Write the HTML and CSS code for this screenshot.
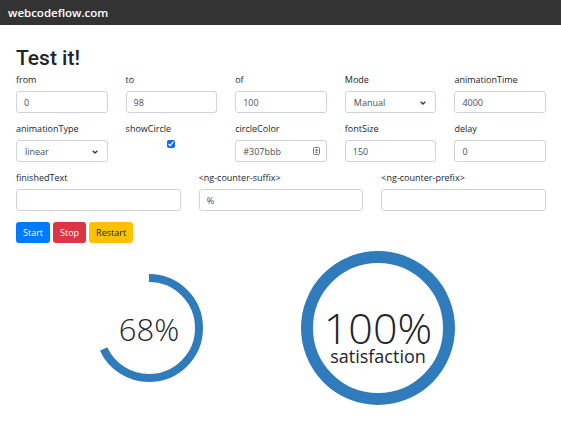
FILE: index.html
```html
<!DOCTYPE html>
<html lang="en">
<head>
	<meta charset="UTF-8">
	<title>ng-counter demo</title>
	<link rel="stylesheet" href="styles.css">
</head>
<body>
	<nav class="navbar">
		<span class="brand">webcodeflow.com</span>
	</nav>
	<div class="container">
		<h2 class="title">Test it!</h2>
		<div class="row row5">
			<div class="field"><label>from</label><input class="control" type="text" value="0"></div>
			<div class="field"><label>to</label><input class="control" type="text" value="98"></div>
			<div class="field"><label>of</label><input class="control" type="text" value="100"></div>
			<div class="field"><label>Mode</label>
				<div class="select-wrap">
					<select class="control select">
						<option>Manual</option>
					</select>
					<svg class="chevron" width="6" height="4" viewBox="0 0 6 4"><path d="M0.7 0.7 L3 3 L5.3 0.7" fill="none" stroke="#343a40" stroke-width="1.3"/></svg>
				</div>
			</div>
			<div class="field"><label>animationTime</label><input class="control" type="text" value="4000"></div>
		</div>
		<div class="row row5">
			<div class="field"><label>animationType</label>
				<div class="select-wrap">
					<select class="control select">
						<option>linear</option>
					</select>
					<svg class="chevron" width="6" height="4" viewBox="0 0 6 4"><path d="M0.7 0.7 L3 3 L5.3 0.7" fill="none" stroke="#343a40" stroke-width="1.3"/></svg>
				</div>
			</div>
			<div class="field"><label>showCircle</label>
				<div class="check"><input type="checkbox" checked></div>
			</div>
			<div class="field"><label>circleColor</label>
				<div class="control color">
					<span>#307bbb</span>
					<svg class="picker" width="7" height="8" viewBox="0 0 7 8">
						<rect x="0.5" y="0.5" width="6" height="7" rx="1" fill="#fff" stroke="#777"/>
						<rect x="2.5" y="2" width="2" height="2.5" fill="#777"/>
						<rect x="2.5" y="5" width="2" height="1" fill="#777"/>
					</svg>
				</div>
			</div>
			<div class="field"><label>fontSize</label><input class="control" type="text" value="150"></div>
			<div class="field"><label>delay</label><input class="control" type="text" value="0"></div>
		</div>
		<div class="row row3">
			<div class="field"><label>finishedText</label><input class="control" type="text" value=""></div>
			<div class="field"><label>&lt;ng-counter-suffix&gt;</label><input class="control" type="text" value="%"></div>
			<div class="field"><label>&lt;ng-counter-prefix&gt;</label><input class="control" type="text" value=""></div>
		</div>
		<div class="buttons">
			<button class="btn btn-start">Start</button>
			<button class="btn btn-stop">Stop</button>
			<button class="btn btn-restart">Restart</button>
		</div>
		<div class="counters">
			<div class="counter small">
				<svg width="108" height="108" viewBox="0 0 108 108">
					<circle cx="54" cy="54" r="50" fill="none" stroke="#307bbb" stroke-width="8"
						stroke-dasharray="213.6 400" transform="rotate(-90 54 54)"/>
				</svg>
				<div class="value">68%</div>
			</div>
			<div class="counter big">
				<svg width="154" height="154" viewBox="0 0 154 154">
					<circle cx="77" cy="77" r="71" fill="none" stroke="#307bbb" stroke-width="12"/>
				</svg>
				<div class="value">
					<span class="num">100%</span>
					<span class="sub">satisfaction</span>
				</div>
			</div>
		</div>
	</div>
</body>
</html>
```

FILE: styles.css
```css
* {
	margin: 0;
	padding: 0;
	box-sizing: border-box;
}
body {
	font-family: "Open Sans", "Noto Sans", sans-serif;
	color: #212529;
	background: #fff;
}
.navbar {
	height: 25px;
	background-color: #333;
	display: flex;
	align-items: center;
	padding-left: 8px;
}
.brand {
	color: #fff;
	font-weight: 600;
	font-size: 11.5px;
}
.container {
	padding: 0 15px 0 16px;
}
.title {
	font-family: Roboto, "Open Sans", sans-serif;
	font-size: 21px;
	font-weight: 500;
	line-height: 25px;
	margin-top: 21px;
	margin-bottom: 2px;
}
.row {
	display: grid;
	column-gap: 18px;
}
.row5 {
	grid-template-columns: repeat(5, 1fr);
}
.row3 {
	grid-template-columns: repeat(3, 1fr);
}
.field {
	display: flex;
	flex-direction: column;
	margin-bottom: 9px;
}
.field label {
	font-size: 9px;
	line-height: 14px;
	margin-bottom: 4px;
}
.control {
	display: block;
	width: 100%;
	height: 22px;
	border: 1px solid #ced4da;
	border-radius: 3px;
	padding: 0 7px;
	font-family: inherit;
	font-size: 9px;
	color: #495057;
	background: #fff;
	outline: none;
}
.select-wrap {
	position: relative;
}
.select {
	appearance: none;
	-webkit-appearance: none;
	padding-left: 8px;
}
.chevron {
	position: absolute;
	right: 10px;
	top: 10px;
	pointer-events: none;
}
.check {
	height: 22px;
	display: flex;
	justify-content: center;
}
.check input {
	width: 8px;
	height: 8px;
	margin-top: 0;
	accent-color: #0a6cff;
}
.color {
	display: flex;
	align-items: center;
	justify-content: space-between;
	padding-right: 6px;
}
.buttons {
	display: flex;
	gap: 3px;
	margin-top: 2px;
}
.btn {
	height: 21px;
	border: none;
	border-radius: 3px;
	padding: 0 7px;
	font-family: inherit;
	font-size: 9px;
	color: #fff;
}
.btn-start {
	background-color: #007bff;
}
.btn-stop {
	background-color: #dc3545;
}
.btn-restart {
	background-color: #ffc107;
	color: #212529;
}
.counters {
	display: flex;
	align-items: center;
	gap: 98px;
	padding-left: 79px;
	margin-top: 8px;
}
.counter {
	display: grid;
	place-items: center;
}
.counter svg,
.counter .value {
	grid-area: 1 / 1;
}
.counter .value {
	display: flex;
	flex-direction: column;
	align-items: center;
	font-weight: 300;
}
.small .value {
	font-size: 31px;
	line-height: 1;
	margin-top: 2px;
}
.big .value {
	padding-top: 16px;
}
.big .num {
	font-size: 43px;
	line-height: 40px;
}
.big .sub {
	font-size: 18px;
	line-height: 16px;
	font-weight: 400;
}
```
